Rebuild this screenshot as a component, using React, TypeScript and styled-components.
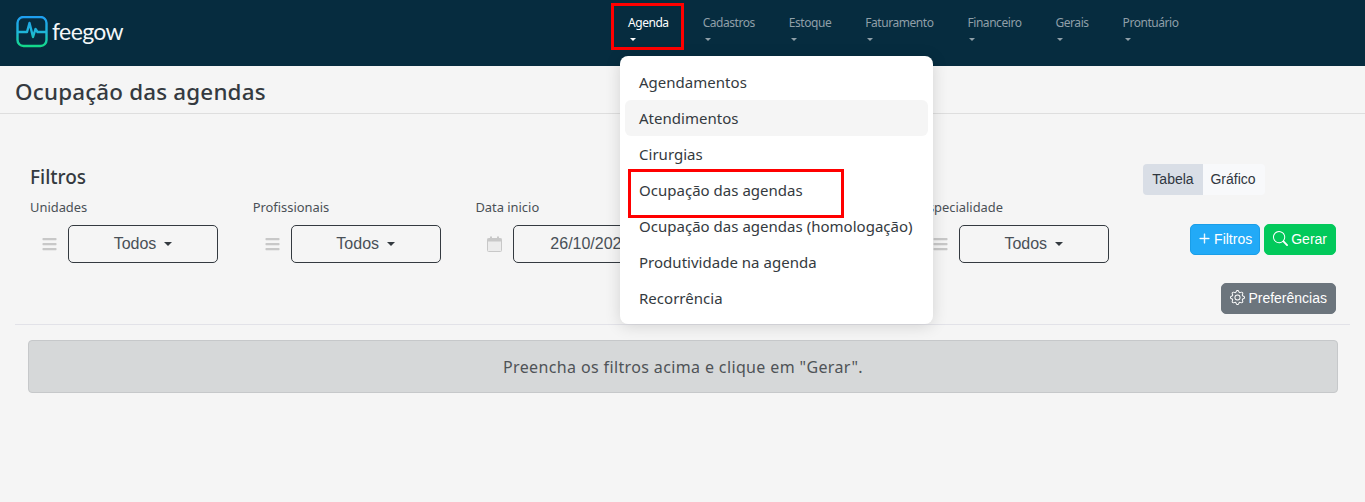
import React from 'react'
import styled, { createGlobalStyle } from 'styled-components'
import { BsGear, BsPlusLg, BsSearch } from 'react-icons/bs'
import { FaBars } from 'react-icons/fa'

const GlobalStyle = createGlobalStyle`
  html, body {
    margin: 0;
    padding: 0;
    background: #f5f5f5;
    color: #343a40;
    font-family: "Noto Sans", "Open Sans", sans-serif;
  }
  * { box-sizing: border-box; }
`

const Page = styled.div`
  position: relative;
  width: 1365px;
  height: 502px;
  overflow: hidden;
`

const Navbar = styled.header`
  display: flex;
  align-items: flex-start;
  height: 66px;
  background: #062c3f;
`

const Logo = styled.div`
  display: flex;
  align-items: center;
  gap: 4px;
  width: 611px;
  height: 64px;
  padding-left: 16px;
`

const LogoText = styled.span`
  position: relative;
  top: -1px;
  color: #f4f7f8;
  font-family: Lato, sans-serif;
  font-size: 23px;
  font-weight: 400;
  letter-spacing: -0.6px;
`

const NavList = styled.nav`
  display: flex;
`

const NavItem = styled.div<{ $active?: boolean }>`
  position: relative;
  display: flex;
  flex-direction: column;
  align-items: flex-start;
  padding: 13px 17px 0;
  height: 50px;
  color: ${({ $active }) => ($active ? '#ffffff' : '#8f9fa8')};
  font-size: 12px;
  letter-spacing: -0.45px;
  line-height: 20px;
  white-space: nowrap;
`

const NavCaret = styled.i`
  display: block;
  margin: 5px 0 0 2px;
  border-top: 3px solid currentColor;
  border-left: 3px solid transparent;
  border-right: 3px solid transparent;
`

const RedBox = styled.span<{ $inset: string }>`
  position: absolute;
  inset: ${({ $inset }) => $inset};
  border: 3px solid #ff0000;
  pointer-events: none;
`

const TitleBar = styled.div`
  display: flex;
  align-items: center;
  height: 48px;
  padding: 4px 15px 0;
  border-bottom: 1px solid #dedede;
`

const Title = styled.h1`
  margin: 0;
  color: #343a40;
  font-size: 22.4px;
  font-weight: 500;
  letter-spacing: 0.18px;
`

const Content = styled.main`
  padding: 50px 15px 0;
`

const FiltersHead = styled.div`
  display: flex;
  align-items: center;
  justify-content: space-between;
  height: 31px;
  padding: 0 85px 0 15px;
`

const FiltersTitle = styled.h2`
  position: relative;
  top: -3px;
  margin: 0;
  color: #343a40;
  font-size: 19px;
  font-weight: 500;
`

const Toggle = styled.div`
  display: flex;
  height: 31px;
  font-family: "Liberation Sans", Arial, sans-serif;
  font-size: 14px;
`

const ToggleButton = styled.div<{ $active?: boolean }>`
  display: flex;
  align-items: center;
  justify-content: center;
  width: ${({ $active }) => ($active ? '60px' : '62px')};
  padding-right: ${({ $active }) => ($active ? '0' : '2px')};
  padding-bottom: 1px;
  background: ${({ $active }) => ($active ? '#d9dee6' : '#f8f9fb')};
  border-radius: ${({ $active }) => ($active ? '4px 0 0 4px' : '0 4px 4px 0')};
  color: #2f3640;
`

const FilterRow = styled.div`
  display: flex;
  margin-top: 3px;
  padding: 0 14px 0 15px;
`

const FilterColumn = styled.div`
  display: flex;
  flex-direction: column;
  width: 222.7px;
`

const FilterLabel = styled.label`
  height: 27px;
  color: #4a5056;
  font-size: 12.9px;
  line-height: 18px;
`

const FilterControl = styled.div`
  display: flex;
  align-items: center;
  padding-left: 12px;
  gap: 11px;
  color: #c8c8c8;
`

const IconSlot = styled.span`
  display: flex;
  width: 15px;
  justify-content: center;
  font-size: 16px;
`

const SelectBox = styled.div<{ $date?: boolean }>`
  display: flex;
  align-items: center;
  justify-content: center;
  gap: 8px;
  width: 150px;
  height: 38px;
  padding-left: ${({ $date }) => ($date ? '4px' : '0')};
  background: transparent;
  border: 1px solid #343a40;
  border-radius: 5px;
  color: #495057;
  font-family: "Liberation Sans", Arial, sans-serif;
  font-size: 16px;
`

const SelectCaret = styled.i`
  border-top: 4px solid #343a40;
  border-left: 4px solid transparent;
  border-right: 4px solid transparent;
`

const Actions = styled.div`
  display: flex;
  align-items: flex-start;
  gap: 4px;
  margin-left: auto;
  padding-top: 26px;
`

const ActionButton = styled.button<{ $bg: string; $border?: string; $pad?: number }>`
  display: inline-flex;
  align-items: center;
  justify-content: center;
  gap: 3px;
  height: 31px;
  padding: 0 ${({ $pad }) => $pad ?? 8}px 2px;
  background: ${({ $bg }) => $bg};
  border: 1px solid ${({ $border, $bg }) => $border || $bg};
  border-radius: 5px;
  color: #fff;
  font-family: "Liberation Sans", Arial, sans-serif;
  font-size: 14px;
`

const PreferencesRow = styled.div`
  display: flex;
  justify-content: flex-end;
  margin-top: 20px;
  padding-right: 14px;
`

const Divider = styled.hr`
  margin: 10px 0 15px;
  border: 0;
  border-top: 1px solid #e2e2e8;
`

const Alert = styled.div`
  display: flex;
  align-items: center;
  justify-content: center;
  height: 53px;
  margin: 0 12px 0 13px;
  background: #d6d8d9;
  border: 1px solid #c6c8ca;
  border-radius: 4px;
  color: #4f5357;
  font-size: 16px;
  letter-spacing: 0.37px;
`

const Menu = styled.ul`
  position: absolute;
  top: 56px;
  left: 620px;
  width: 313px;
  margin: 0;
  padding: 8px 5px;
  list-style: none;
  background: #fff;
  border-radius: 8px;
  box-shadow: 0 2px 16px rgba(0, 0, 0, 0.14);
`

const MenuItem = styled.li<{ $hover?: boolean }>`
  position: relative;
  height: 36px;
  padding-left: 14px;
  background: ${({ $hover }) => ($hover ? '#f5f5f5' : 'transparent')};
  border-radius: 6px;
  color: #343a40;
  font-size: 15px;
  letter-spacing: 0.02px;
  line-height: 37px;
  white-space: nowrap;
`

const navItems = ['Cadastros', 'Estoque', 'Faturamento', 'Financeiro', 'Gerais', 'Prontuário']

const menuItems = [
  'Agendamentos',
  'Atendimentos',
  'Cirurgias',
  'Ocupação das agendas',
  'Ocupação das agendas (homologação)',
  'Produtividade na agenda',
  'Recorrência',
]

const filters = [
  { label: 'Unidades', value: 'Todos' },
  { label: 'Profissionais', value: 'Todos' },
  { label: 'Data inicio', value: '26/10/2023', date: true },
  { label: 'Data fim', value: '26/10/2023', date: true },
  { label: 'Especialidade', value: 'Todos' },
]

const LogoMark = () => (
  <svg width="32" height="32" viewBox="0 0 32 32" fill="none">
    <defs>
      <linearGradient id="logo-gradient" x1="0" y1="0" x2="0" y2="1">
        <stop offset="0" stopColor="#1e9ff0" />
        <stop offset="0.55" stopColor="#1fb7d6" />
        <stop offset="1" stopColor="#13d98a" />
      </linearGradient>
    </defs>
    <path
      d="M1.5 16V7a6 6 0 0 1 6-6h17a6 6 0 0 1 6 6v9h-9l-2-3-2.5 8-3.5-14-2.5 9H1.5v8a6 6 0 0 0 6 6h17a6 6 0 0 0 6-6v-8"
      stroke="url(#logo-gradient)"
      strokeWidth="2.4"
      strokeLinejoin="round"
    />
  </svg>
)

const CalendarIcon = () => (
  <svg width="15" height="16" viewBox="0 0 15 16">
    <rect x="0.5" y="2.5" width="14" height="13" rx="1" fill="#ececec" stroke="#c8c8c8" />
    <rect x="0.5" y="2.5" width="14" height="3" fill="#c8c8c8" />
    <rect x="3" y="0.5" width="2" height="3" fill="#c8c8c8" />
    <rect x="10" y="0.5" width="2" height="3" fill="#c8c8c8" />
  </svg>
)

export default function App() {
  return (
    <Page>
      <GlobalStyle />
      <Navbar>
        <Logo>
          <LogoMark />
          <LogoText>feegow</LogoText>
        </Logo>
        <NavList>
          <NavItem $active>
            Agenda
            <NavCaret />
            <RedBox $inset="3px 2px 0 0" />
          </NavItem>
          {navItems.map((item) => (
            <NavItem key={item}>
              {item}
              <NavCaret />
            </NavItem>
          ))}
        </NavList>
      </Navbar>
      <TitleBar>
        <Title>Ocupação das agendas</Title>
      </TitleBar>
      <Content>
        <FiltersHead>
          <FiltersTitle>Filtros</FiltersTitle>
          <Toggle>
            <ToggleButton $active>Tabela</ToggleButton>
            <ToggleButton>Gráfico</ToggleButton>
          </Toggle>
        </FiltersHead>
        <FilterRow>
          {filters.map(({ label, value, date }) => (
            <FilterColumn key={label}>
              <FilterLabel>{label}</FilterLabel>
              <FilterControl>
                <IconSlot>{date ? <CalendarIcon /> : <FaBars />}</IconSlot>
                <SelectBox $date={date}>
                  {value}
                  {!date && <SelectCaret />}
                </SelectBox>
              </FilterControl>
            </FilterColumn>
          ))}
          <Actions>
            <ActionButton $bg="#22aaf7" $border="#1a9ee8" $pad={7}>
              <BsPlusLg size={13} stroke="currentColor" strokeWidth={0.6} />
              Filtros
            </ActionButton>
            <ActionButton $bg="#02c95b">
              <BsSearch size={15} />
              Gerar
            </ActionButton>
          </Actions>
        </FilterRow>
        <PreferencesRow>
          <ActionButton $bg="#6c757d">
            <BsGear size={15} />
            Preferências
          </ActionButton>
        </PreferencesRow>
        <Divider />
        <Alert>Preencha os filtros acima e clique em "Gerar".</Alert>
      </Content>
      <Menu>
        {menuItems.map((item, index) => (
          <MenuItem key={item} $hover={index === 1}>
            {item}
            {index === 3 && <RedBox $inset="-3px 84px -10px 3px" />}
          </MenuItem>
        ))}
      </Menu>
    </Page>
  )
}
